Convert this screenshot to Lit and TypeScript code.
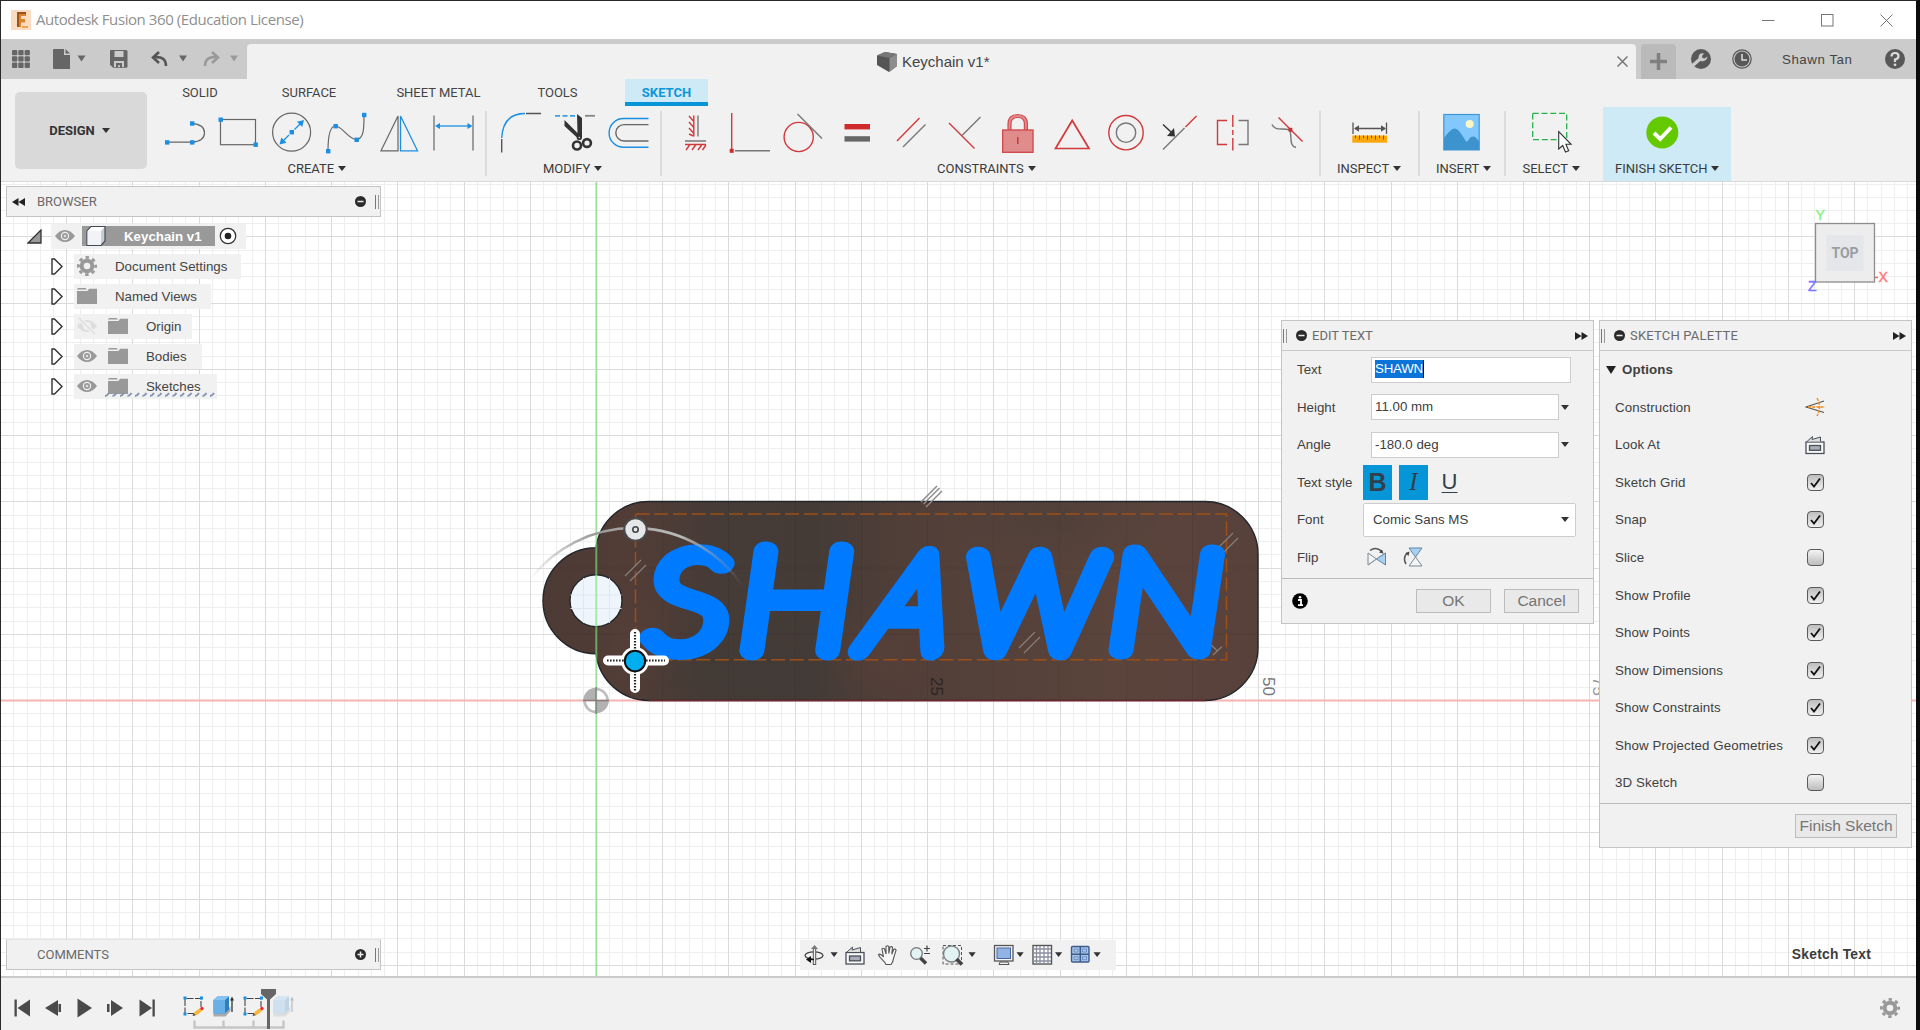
import { LitElement, html, svg, css } from "lit";
import { customElement } from "lit/decorators.js";

const GRID = 13.243;
const ORIGIN = { x: 596, y: 700.5 };

const caret = html`<i class="caret"></i>`;

const sq = (x: number, y: number) => svg`<rect x=${x - 2} y=${y - 2} width="4.4" height="4.4" fill="#1a8fe3"/>`;

const createIcons = svg`
  <g fill="none" stroke="#666" stroke-width="1.2">
    <path d="M167 142.2H192M192 123.3q12.5 1 12.5 9.5t-12.5 9.4"/>
    <rect x="220.5" y="119.5" width="35" height="25.2"/>
    <circle cx="291.6" cy="132.2" r="19"/>
    <path d="M328 151Q328 126 335.500 126C342 126 348 139 356.500 139.600C364 139 364 128 364 115"/>
    <path d="M381 150.800L398 116V150.800Z"/>
    <path d="M434 115.500V150.500M473 115.500V150.500"/>
  </g>
  <g fill="none" stroke="#1a8fe3" stroke-width="1.300">
    <path d="M400.500 116L417.500 150.800H400.500Z"/>
    <path d="M438 126H470"/>
    <path d="M283 141L289 135M294.500 129.500L300.500 123.500"/>
  </g>
  <g fill="#1a8fe3">
    <path d="M435 126l5-3v6zM472.500 126l-5-3v6z"/>
    <path d="M304 120l-7 1.800 5.200 5.200zM279.500 144.500l1.800-7 5.200 5.200z"/>
  </g>
  ${sq(167, 142.200)}${sq(192, 142.200)}${sq(192, 123.300)}${sq(220.500, 119.500)}${sq(255.500, 144.500)}
  ${sq(291.600, 132)}${sq(328, 151)}${sq(335.500, 126)}${sq(356.500, 139.600)}${sq(364, 114.800)}
`;

const modifyIcons = svg`
  <g fill="none" stroke-width="1.400">
    <path d="M501.700 138Q503 113.500 525 113.500" stroke="#1a8fe3"/>
    <path d="M501.700 139V152.500M526 113.500H541" stroke="#555"/>
    <path d="M555 115.800H575" stroke="#3a9ee8" stroke-dasharray="5 2.500" stroke-width="1.800"/>
    <path d="M585 115.800H595" stroke="#888" stroke-width="1.800"/>
    <path d="M648.500 118.500H623.500a14.300 14.300 0 0 0 0 28.800H648.500" stroke="#1a8fe3"/>
    <path d="M648.500 124.600H624a8.100 8.100 0 0 0 0 16.400H648.500" stroke="#666"/>
  </g>
  <path d="M577 114l5 4v20h-4.500l-13-12v-6l13 13z" fill="#333"/>
  <circle cx="577" cy="145.500" r="4" fill="none" stroke="#333" stroke-width="2.600"/>
  <circle cx="587" cy="143" r="3.900" fill="none" stroke="#333" stroke-width="2.600"/>
  <circle cx="579.300" cy="137.500" r="2.600" fill="#333"/><circle cx="579.300" cy="137.500" r=".8" fill="#ddd"/>
`;

const constraintIcons = svg`
  <g fill="none" stroke="#d03a3d" stroke-width="1.400">
    <path d="M693.800 115.500V136.500M689 116l4.800 5.500M689 122l4.800 5.500M689 128l4.800 5.500M689 134l4.500 2"/>
    <path d="M685 144.500H706M690 144.500l-4 5.500M696 144.500l-4 5.500M702 144.500l-4 5.500M706 145l-3.500 5"/>
    <path d="M731.700 113V150"/>
    <circle cx="798.700" cy="137" r="14.600"/>
    <path d="M897 141L919.500 118M949 123L974.500 148.500"/>
    <path d="M1055.500 148.500H1089L1072.200 120.500Z" stroke-width="1.700"/>
    <circle cx="1126" cy="132.700" r="17.200"/>
    <path d="M1185.500 127L1196.500 116"/>
    <path d="M1227 120.500H1217.500V144.500H1227M1232.800 115V150.500" />
    <path d="M1232.800 127v3M1232.800 135v3" stroke="#f1f1f1" stroke-width="3"/>
    <path d="M1278.500 117.500L1302.500 141.500"/>
  </g>
  <g fill="none" stroke="#777" stroke-width="1.400">
    <path d="M698 115.500V136.500M685 141H706"/>
    <path d="M735 150.800H770M797.500 114L822 138.500"/>
    <path d="M903 147L925.500 124.500M962 135.500L980.500 117"/>
    <circle cx="1126" cy="132.700" r="9.700"/>
    <path d="M1163 149.500L1184.500 128"/>
    <path d="M1238.500 120.500H1248V144.500H1238.500"/>
    <path d="M1272 124.500c3 7 10 3 18 5.500c2 8-1 16 6 17.500"/>
  </g>
  <rect x="729.700" y="148.800" width="4" height="4" fill="#d02a2d"/>
  <rect x="844.500" y="124" width="25.500" height="5.400" fill="#d02a2d"/>
  <rect x="844.500" y="136.200" width="25.500" height="5.400" fill="#666"/>
  <path d="M1009.500 130v-6q0-8 8.200-8t8.200 8v6" fill="none" stroke="#d24c4f" stroke-width="4.200"/>
  <path d="M1009.500 130v-6q0-8 8.200-8t8.200 8v6" fill="none" stroke="#e08b8c" stroke-width="1.800"/>
  <rect x="1002.700" y="130" width="30.300" height="22.300" fill="#e08b8c" stroke="#d24c4f" stroke-width="1.400"/>
  <path d="M1017.800 137v7" stroke="#c23336" stroke-width="1.400"/>
  <path d="M1163 124.500L1171 132" stroke="#333" stroke-width="1.500"/>
  <path d="M1175 136.500l-8-.5 7-8z" fill="#333"/>
  <rect x="1288.500" y="127.800" width="3.800" height="3.800" fill="#d02a2d"/>
`;

const inspectIcons = svg`
  <g stroke="#555" stroke-width="1.300" fill="none">
    <path d="M1353 122.500V134M1386.500 122.500V134M1355 128.500H1385"/>
  </g>
  <path d="M1354 128.500l5-3.200v6.400zM1386 128.500l-5-3.200v6.400z" fill="#555"/>
  <rect x="1352.300" y="135.500" width="34.800" height="7.200" fill="#f9a70b"/>
  <path d="M1355.500 135.500v2.500M1359.500 135.500v4M1363.500 135.500v2.500M1367.500 135.500v4M1371.500 135.500v2.500M1375.500 135.500v4M1379.500 135.500v2.500M1383.500 135.500v4" stroke="#7a5410" stroke-width="1"/>
`;

const insertIcons = svg`
  <rect x="1443.800" y="114.500" width="35.400" height="35.400" fill="#82c8fd" stroke="#3f97d3" stroke-width="1.200"/>
  <circle cx="1469.700" cy="124" r="4" fill="#fbf6c8"/>
  <path d="M1444 138c4-5 7-9.500 11-9.500s8 8.500 11.500 13.500c2.500-2 3.500-5.500 6.500-5.500s4 2.500 6.200 5V150H1444z" fill="#3d93ce"/>
`;

const selectIcons = svg`
  <rect x="1532.700" y="113.300" width="34" height="26.300" fill="none" stroke="#25b14c" stroke-width="1.300" stroke-dasharray="6 2.800"/>
  <path d="M1558.700 131.500v17.500l4-3.500 2.800 6.500 3.200-1.300-2.800-6.400h5.200z" fill="#fff" stroke="#333" stroke-width="1.100"/>
`;

const finishIcons = svg`
  <circle cx="1662.300" cy="132.500" r="16" fill="#65c900"/>
  <path d="M1654 133l6.200 6 10.800-11.500" fill="none" stroke="#fff" stroke-width="4"/>
`;

const groups = [
  { x: 160, w: 327, name: "CREATE", pad: "127.500px", art: createIcons },
  { x: 487, w: 175, name: "MODIFY", pad: "56px", art: modifyIcons },
  { x: 662, w: 659, name: "CONSTRAINTS", pad: "275px", art: constraintIcons },
  { x: 1321, w: 99, name: "INSPECT", pad: "16px", art: inspectIcons },
  { x: 1420, w: 86, name: "INSERT", pad: "16px", art: insertIcons },
  { x: 1506, w: 97, name: "SELECT", pad: "16.500px", art: selectIcons },
  { x: 1603, w: 128, name: "FINISH SKETCH", pad: "12px", art: finishIcons, on: true },
];

const tabs = [
  { n: "SOLID", w: 80 }, { n: "SURFACE", w: 138 }, { n: "SHEET METAL", w: 121 },
  { n: "TOOLS", w: 117 }, { n: "SKETCH", w: 83, on: true },
];

const eye = html`<svg class="i20" viewBox="0 0 20 20"><path d="M0 10Q4.500 4 10 4t10 6q-4.500 6-10 6T0 10z" fill="#999"/><circle cx="10" cy="10" r="4.200" fill="#f1f1f1"/><circle cx="10" cy="10" r="3" fill="#999"/><circle cx="10" cy="10" r="1.300" fill="#ddd"/></svg>`;
const eyeOff = html`<svg class="i20" viewBox="0 0 20 20"><path d="M0 10Q4.500 4 10 4t10 6q-4.500 6-10 6T0 10z" fill="#dedede"/><circle cx="10" cy="10" r="4" fill="#f1f1f1"/><circle cx="10" cy="10" r="2" fill="#dedede"/><path d="M2 2L18 18" stroke="#f1f1f1" stroke-width="4"/><path d="M2 2L18 18" stroke="#dedede" stroke-width="1.600"/></svg>`;
const folder = html`<svg class="i20" viewBox="0 0 20 20"><path d="M0 3.500Q0 2 1.500 2H8.500L10 3.500H0zM0 5h10.500L12 2.800H20V18H0z" fill="#999"/></svg>`;
const gear = html`<svg class="i20" viewBox="0 0 20 20"><circle cx="10" cy="10" r="5.300" fill="none" stroke="#999" stroke-width="4"/><circle cx="10" cy="10" r="8.600" fill="none" stroke="#999" stroke-width="2.800" stroke-dasharray="3.400 3.354" stroke-dashoffset="1.700"/></svg>`;
const expander = html`<svg class="exp" viewBox="0 0 12 17"><path d="M1 1h2.500l7.500 7.500L3.500 16H1z" fill="#fff" stroke="#333" stroke-width="1.400"/></svg>`;

const treeRows = [
  { label: "Document Settings", icons: [gear], w: 167 },
  { label: "Named Views", icons: [folder], w: 137 },
  { label: "Origin", icons: [eyeOff, folder], w: 118 },
  { label: "Bodies", icons: [eye, folder], w: 128 },
  { label: "Sketches", icons: [eye, folder], w: 143, wavy: true },
];

const minus = html`<svg class="i11" viewBox="0 0 11 11"><circle cx="5.500" cy="5.500" r="5.500" fill="#2b2b2b"/><path d="M2.500 5.500h6" stroke="#eee" stroke-width="1.500"/></svg>`;
const plus = html`<svg class="i11" viewBox="0 0 11 11"><circle cx="5.500" cy="5.500" r="5.500" fill="#2b2b2b"/><path d="M2.500 5.500h6M5.500 2.500v6" stroke="#eee" stroke-width="1.500"/></svg>`;
const ffwd = html`<svg class="ff" viewBox="0 0 13 8"><path d="M0 0l6.500 4L0 8zM6.500 0L13 4 6.500 8z" fill="#222"/></svg>`;
const grip = html`<i class="grip"></i>`;

const lookAt = (x: number, y: number) => svg`<g transform="translate(${x} ${y})" fill="none" stroke="#4a4f5a" stroke-width="1.300">
  <rect x="1" y="7" width="18" height="11.500" fill="#fafafa"/><rect x="4.500" y="10.500" width="11" height="4.800" fill="#a9adb8"/>
  <path d="M2 6.500L7.500 1.500 7 4.500 15.500 2V6.500" fill="#ddd" stroke-width="1"/></g>`;

const construction = html`<svg class="i20" viewBox="0 0 20 20"><path d="M19 4L1 10l18 5.500" fill="none" stroke="#555" stroke-width="1.300"/><path d="M3 10h17M12 1q5 9 0 18" fill="none" stroke="#f08a1c" stroke-width="1.500" stroke-dasharray="3 1.200"/></svg>`;

const checks: Array<[string, boolean]> = [
  ["Sketch Grid", true], ["Snap", true], ["Slice", false], ["Show Profile", true], ["Show Points", true],
  ["Show Dimensions", true], ["Show Constraints", true], ["Show Projected Geometries", true], ["3D Sketch", false],
];

const box = (on: boolean) => html`<span class="check ${on ? "on" : ""}">${on
  ? html`<svg viewBox="0 0 15 15"><path d="M3 8l3 3.500L12 3.500" fill="none" stroke="#111" stroke-width="1.800"/></svg>` : ""}</span>`;

const gridLines = () => {
  const out = [];
  for (let pass = 0; pass < 2; pass++) {
    for (let i = -45; i <= 100; i++) {
      const major = i % 5 === 0;
      if (major !== (pass === 1)) continue;
      const x = Math.round(ORIGIN.x + i * GRID) + 0.5;
      if (x > 0 && x < 1916) out.push(svg`<path d="M${x} 182V976" stroke=${major ? "#dbdbdb" : "#eeeeee"}/>`);
    }
    for (let j = -40; j <= 21; j++) {
      const major = j % 5 === 0;
      if (major !== (pass === 1)) continue;
      const y = Math.floor(ORIGIN.y + j * GRID) + 0.5;
      if (y > 182) out.push(svg`<path d="M0 ${y}H1916" stroke=${major ? "#dbdbdb" : "#eeeeee"}/>`);
    }
  }
  return out;
};

const tick = (x: number, y: number) => svg`<path d="M${x - 10} ${y + 5}L${x + 6} ${y - 11}M${x - 5} ${y + 10}L${x + 11} ${y - 6}"/>`;

/* Letters of the sketch text, each with its own stretch: x, scale x, scale y, skew, stroke width. */
const letters: Array<[string, number, number, number, number, number]> = [
  ["S", 647, 1.27, 1.02, 0, 19],
  ["H", 739, 1.24, 1.07, 0, 18.5],
  ["A", 861, 1.03, 1.01, -12, 21],
  ["W", 966, 1.1, 1.01, 0, 20.5],
  ["N", 1108, 1.26, 1.03, 0, 18.5],
];

const BODY = "M649 501.500H1205A53 53 0 0 1 1258 554.500V647.500A53 53 0 0 1 1205 700.500H649A53 53 0 0 1 596 653.700A53 53 0 0 1 543 600.700A53 53 0 0 1 596 547.700A53 53 0 0 1 649 501.500Z";

const scene = () => html`<svg class="scene" viewBox="0 182 1916 794">
  <defs>
    <linearGradient id="body" x1="543" x2="1258" y1="0" y2="0" gradientUnits="userSpaceOnUse">
      <stop offset="0" stop-color="#4c3a35"/><stop offset=".12" stop-color="#523d36"/><stop offset=".24" stop-color="#463b37"/>
      <stop offset=".38" stop-color="#443b37"/><stop offset=".5" stop-color="#503e38"/><stop offset=".62" stop-color="#54413a"/>
      <stop offset=".8" stop-color="#5a443c"/><stop offset="1" stop-color="#59413b"/>
    </linearGradient>
    <radialGradient id="patch"><stop offset="0" stop-color="#5b4039"/><stop offset="1" stop-color="#5b4039" stop-opacity="0"/></radialGradient>
    <radialGradient id="shade"><stop offset="0" stop-color="#413a35"/><stop offset="1" stop-color="#413a35" stop-opacity="0"/></radialGradient>
    <linearGradient id="arc" x1="530" x2="745" y1="0" y2="0" gradientUnits="userSpaceOnUse">
      <stop offset="0" stop-color="#888" stop-opacity="0"/><stop offset=".3" stop-color="#999"/><stop offset=".7" stop-color="#bbb"/><stop offset="1" stop-color="#888" stop-opacity="0"/>
    </linearGradient>
    <clipPath id="clip"><path d=${BODY}/></clipPath>
  </defs>
  ${gridLines()}
  <path d="M0 700.500H1916" stroke="#f5b3b3" stroke-width="2"/>
  <path d=${BODY} fill="url(#body)"/>
  <g clip-path="url(#clip)">
    <ellipse cx="880" cy="655" rx="70" ry="60" fill="url(#patch)" opacity=".6"/>
    <ellipse cx="740" cy="670" rx="130" ry="60" fill="url(#shade)" opacity=".8"/>
    <ellipse cx="1060" cy="520" rx="110" ry="50" fill="url(#shade)" opacity=".35"/>
    <ellipse cx="640" cy="640" rx="50" ry="60" fill="url(#patch)" opacity=".4"/>
  </g>
  <path d=${BODY} fill="none" stroke="#22262a" stroke-width="1.400"/>
  <path d="M649 700.500H1205" stroke="#6e2a30" stroke-width="1.600"/>
  <g stroke="#000" stroke-opacity=".06">
    ${[662, 728, 795, 861, 927, 993, 1059, 1126, 1192].map((x) => svg`<path d="M${x}.500 502V700"/>`)}
    ${[568, 634].map((y) => svg`<path d="M560 ${y}H1258"/>`)}
  </g>
  <circle cx="596" cy="600.700" r="26" fill="#eef5fc" stroke="#22262a" stroke-width="1.400"/>
  <path d="M570.500 595H621.500M570.500 608.500H621.500M583.500 578V623M609.500 578V623" stroke="#e0e8ee"/>
  <path d="M596.300 182V976" stroke="#7ee07e" stroke-opacity=".65" stroke-width="2"/>

  <rect x="635.500" y="514" width="591" height="145.700" fill="none" stroke="#9c5018" stroke-width="1.500" stroke-dasharray="14 4.700"/>
  <g stroke="#877f7a" stroke-width="1.200" fill="none">
    ${tick(635, 571)}${tick(1029, 643)}${tick(1227, 544)}
    <path d="M1213 655L1222 646.500M1209 643L1217.500 651"/>
  </g>
  <g stroke="#8c8c8c" stroke-width="1.500">${tick(931, 497)}<path d="M923.500 504L939.500 488"/></g>

  <g class="shawn">${letters.map(([ch, x, sx, sy, skew, w]) => svg`<text transform="translate(${x} 650) skewX(${skew}) scale(${sx} ${sy})" stroke-width=${w}>${ch}</text>`)}</g>

  <path d="M531 578A131 131 0 0 1 742 585" fill="none" stroke="url(#arc)" stroke-width="2.600"/>
  <circle cx="635.500" cy="529.500" r="11.200" fill="#e6e7e9" stroke="#4a4a4a" stroke-width="2"/>
  <circle cx="635.500" cy="529.500" r="2.700" fill="none" stroke="#444" stroke-width="1.600"/>

  <path d="M608 660.500H664M635 634V688" stroke="#fff" stroke-width="10" stroke-linecap="round"/>
  <circle cx="635" cy="661" r="14" fill="#fff"/>
  <path d="M607 660.500H665M635 632V691" stroke="#222" stroke-width="2.200" stroke-dasharray="1.600 1.400"/>
  <circle cx="635" cy="661" r="10.200" fill="#00aeef" stroke="#111" stroke-width="2"/>

  <g opacity=".75">
    <circle cx="596" cy="700.500" r="11.500" fill="#fff" fill-opacity=".5" stroke="#a9a9a9" stroke-width="2.600"/>
    <path d="M596 700.500V688A12.500 12.500 0 0 0 583.500 700.500ZM596 700.500V713A12.500 12.500 0 0 0 608.500 700.500Z" fill="#999"/>
    <path d="M596 687V714M583 700.500H609" stroke="#6d6d6d" stroke-width="1.500"/>
  </g>
  <g class="mark">
    <text transform="translate(931 677) rotate(90)" fill="#2e2522">25</text>
    <text transform="translate(1262.500 677) rotate(90)" fill="#777">50</text>
    <text transform="translate(1592.500 677) rotate(90)" fill="#999">75</text>
  </g>

  <g class="cube">
    <text x="1815.500" y="220" fill="#8cf08c" stroke="#8cf08c">Y</text>
    <rect x="1815.500" y="223.500" width="59" height="58.500" fill="#ededed" stroke="#8d8d8d" stroke-width="1.300"/>
    <rect x="1826.500" y="235" width="37" height="36" fill="#e4e6e9"/>
    <text class="top" x="1845" y="258" text-anchor="middle">TOP</text>
    <text x="1808" y="290.500" fill="#7a7aff" stroke="#7a7aff">Z</text>
    <path d="M1875 277.500h3" stroke="#ff5b5b" stroke-width="1.500"/>
    <text x="1878.500" y="282" fill="#ff8080" stroke="#ff8080">X</text>
  </g>
</svg>`;

const navIcons = html`<svg width="316" height="30" viewBox="800 940 316 30">
  <ellipse cx="814" cy="955.500" rx="9" ry="3.600" fill="none" stroke="#444" stroke-width="1.300"/>
  <path d="M814.500 948V965" stroke="#555" stroke-width="3.400"/><path d="M814.500 948V964" stroke="#eee" stroke-width="1.400"/>
  <path d="M811 949l3.500-4 3.500 4z" fill="#777"/>
  <path d="M806 959.500l5-3.500v7z" fill="#111"/><path d="M809 959.500h5" stroke="#111" stroke-width="1.300"/>
  ${lookAt(845, 945.500)}
  <path d="M886 964.500c-1-3.500-6.500-6-7.500-10q2-1.500 5 2.500l-1.500-8q1.500-1.500 2.500 0l1.500 5V946.500q1.500-1.500 2.800 0v7l1.200-6.500q1.700-1 2.500.3l-.7 7 2-5q1.800-.6 2.300.8l-2.500 8q-.5 4-2.500 6.400z" fill="#f8f8f8" stroke="#555" stroke-width="1.100"/>
  <circle cx="916.500" cy="953.500" r="5.800" fill="#e3f3f4" stroke="#777" stroke-width="1.300"/>
  <path d="M920.500 958l5.500 5.500" stroke="#444" stroke-width="3.500"/>
  <path d="M924 948.500h6M927 945.500v6M924 953.500h6" stroke="#444" stroke-width="1.200"/>
  <rect x="943" y="945.500" width="18.500" height="18.500" fill="none" stroke="#555" stroke-dasharray="3 2"/>
  <circle cx="951.500" cy="954" r="8" fill="#e3f3f4" stroke="#7d8486" stroke-width="1.400"/>
  <path d="M956.500 959l5.500 5.500" stroke="#444" stroke-width="3.800"/>
  <path d="M1000 962h8l1 2.500h-10z" fill="#eee" stroke="#555"/>
  <rect x="994.500" y="945.500" width="18.500" height="15.500" fill="#f4f4f4" stroke="#555" stroke-width="1.300"/>
  <rect x="997" y="948" width="13.500" height="10.500" fill="#92b4e4" stroke="#4766a3"/>
  <rect x="1033" y="945.500" width="18.500" height="18.500" fill="#fff" stroke="#555" stroke-width="1.400"/>
  <path d="M1036.500 946v18M1040 946v18M1044 946v18M1048 946v18M1033 949h18M1033 953h18M1033 957h18M1033 961h18" stroke="#8a8fa0" stroke-width="1.300"/>
  <rect x="1071.500" y="946.500" width="17.500" height="15.500" rx="1" fill="#a9c5ea" stroke="#3e5b8c" stroke-width="1.400"/>
  <path d="M1080.300 946.500v15.500M1071.500 954.200h17.500" stroke="#3e5b8c" stroke-width="1.600"/>
  <path d="M1074 949h4v3h-4zM1082.500 949h4v3h-4zM1074 956.700h4v3h-4zM1082.500 956.700h4v3h-4z" fill="none" stroke="#5f86bd" stroke-width=".8"/>
  ${[834, 972, 1020, 1058.500, 1097].map((x) => svg`<path d="M${x - 3.500} 952.300h7.200l-3.600 4.700z" fill="#333"/>`)}
</svg>`;

const skIcon = (x: number) => svg`<g transform="translate(${x} 0)">
  <path d="M1.500 999v14.500H11M3 998.500H17.500V1007" fill="none" stroke="#444" stroke-width="1.100" stroke-dasharray="7 1.500"/>
  <path d="M10 1015.500l1-3.500 5.500-4 2.500 2.800-5.500 4.200z" fill="#f5b83d"/><path d="M9 1016l1-3 2.300 2.200z" fill="#555"/>
  <circle cx="18.500" cy="1008.500" r="1.700" fill="#ee2b33"/>
  <path d="M0 996.500h3v3H0zM16.500 996.500h3v3h-3zM0 1012.500h3v3H0z" fill="#1a8fe3"/></g>`;
const exIcon = (x: number, o: number) => svg`<g transform="translate(${x} 0)" opacity=${o}>
  <path d="M0 1013.500V1016.500H12L17 1011V1006L12 1013z" fill="#aaa"/>
  <path d="M0 1000l4-3.500h11.500v13l-4 4H0z" fill="#2f7fbf"/><path d="M0 1000h11.500v13.500H0z" fill="#69b0e6"/><path d="M0 1000l4-3.500h11.500l-4 3.500z" fill="#86c5f3"/>
  <path d="M18.500 1012V999" stroke="#333" stroke-width="1.300"/><path d="M16.500 1000.500l2-4 2 4z" fill="#333"/></g>`;

const timeline = html`<svg width="330" height="52" viewBox="0 978 330 52">
  <g fill="#4a4a4a">
    <path d="M14.500 999.500h2.300v17h-2.300zM17.500 1008l12.500-8.500v17z"/>
    <path d="M45 1008l13-8v16zM58.500 1004h2.500v8h-2.500z"/>
    <path d="M77.500 998.500l14.500 9.500-14.500 9.500z"/>
    <path d="M107 1004h2.500v8h-2.500zM111 1000l12 8-12 8z"/>
    <path d="M139.500 999.500l12.500 8.500-12.500 8.500zM152.500 999.500h2.300v17h-2.300z"/>
  </g>
  <path d="M194.500 1020.500v7H283.500v-7M223.500 1020.500v7M253.500 1020.500v7" fill="none" stroke="#c6c6c6" stroke-width="2.400"/>
  ${skIcon(183.500)}${exIcon(213.500, 1)}${skIcon(243.500)}${exIcon(273.500, 0.25)}
  <path d="M261 989h15v5l-6 5.500V1029h-3V999.500L261 994z" fill="#666"/>
</svg>`;

@customElement("app-root")
export class AppRoot extends LitElement {
  static styles = css`
    :host { display: block; }
    * { box-sizing: border-box; }
    svg { display: block; flex: none; }
    .win { width: 1920px; height: 1030px; display: flex; flex-direction: column; background: #f1f1f1; overflow: hidden;
      border-top: 1px solid #2b2829; border-left: 1px solid #2b2829; border-right: 4px solid #0c0c0c;
      font: 13.3px "Liberation Sans", Arial, sans-serif; color: #3c3c3c; white-space: nowrap; }
    .caret { display: inline-block; border: 4px solid transparent; border-top: 5px solid #333; border-bottom: 0; flex: none; }

    .title { height: 38px; flex: none; background: #fff; display: flex; align-items: center; padding: 0 23px 0 10px; color: #8f8f8f; }
    .title span { font: 15px "Open Sans", sans-serif; letter-spacing: -0.42px; margin: -2px 0 0 5px; flex: 1; }
    .title .ctl { display: flex; gap: 46px; }

    .bar { height: 40px; flex: none; background: #cbcbcb; display: flex; align-items: flex-end; }
    .tab { width: 1389px; height: 35px; background: #f1f1f1; border-radius: 4px 4px 0 0; display: flex; align-items: center; padding: 0 8px 0 630px; }
    .tab span { font-size: 15px; margin-left: 5px; flex: 1; color: #444; }
    .add { width: 35px; height: 35px; margin-left: 5px; background: #bababa; border-radius: 4px 4px 0 0; display: grid; place-items: center; }
    .user { height: 40px; flex: 1; display: flex; align-items: center; padding-left: 15px; }
    .user span { margin: 0 32px 0 30px; color: #444; letter-spacing: .55px; }

    .ribbon { height: 103px; flex: none; display: flex; border-bottom: 1px solid #d9d9d9; }
    .design { width: 132px; height: 77px; margin: 13px 13px 0 14px; background: #d9d9d9; border-radius: 5px; display: flex; align-items: center;
      justify-content: center; gap: 7px; font: 700 13px Roboto, sans-serif; color: #333; padding-right: 3px; }
    .tabs { display: flex; height: 28px; font: 13px Roboto, sans-serif; color: #444; }
    .tabs div { height: 27px; display: grid; place-items: center; }
    .tabs .on { margin-left: 9px; background: #cdeaf6; border-bottom: 4px solid #0696d7; color: #0d97d8; font-weight: 700; padding-top: 3px; }
    .groups { display: flex; height: 74px; }
    .group { border-right: 2px solid #dedede; border-image: linear-gradient(#f1f1f1 5px, #dcdcdc 5px, #dcdcdc 68px, #f1f1f1 68px) 1; }
    .group.on { background: #cdeaf6; border: 0; }
    .group.last { border: 0; }
    .group .lbl { font: 13px Roboto, sans-serif; color: #3a3a3a; display: flex; align-items: center; gap: 4px; height: 22px; margin-top: -1px; }

    .canvas { position: relative; height: 794px; flex: none; background: #fff; overflow: hidden; }
    .scene { width: 1916px; height: 794px; margin-left: -1px; }
    .shawn { font: italic 100 132px Lato, sans-serif; fill: #007aff; stroke: #007aff; stroke-linejoin: round; }
    .mark { font: 17px "Liberation Sans", sans-serif; }
    .cube { font: 14px "Liberation Sans", sans-serif; stroke-width: .5; }
    .top { font: 700 14px Roboto, sans-serif; fill: #9a9da2; }

    .panel { position: absolute; background: #f1f1f1; border: 1px solid #c4c4c4; color: #404040; }
    .head { height: 30px; display: flex; align-items: center; border-bottom: 1px solid #c9c9c9; color: #666; }
    .head b { font: 13px Roboto, sans-serif; flex: 1; color: #6a6a6a; }
    .grip { width: 4px; height: 14px; border-left: 1px solid #777; border-right: 1px solid #999; }
    .i11 { width: 11px; height: 11px; } .i20 { width: 20px; height: 20px; } .ff { width: 13px; height: 8px; } .exp { width: 12px; height: 17px; }
    .strip { left: 5px; width: 375px; height: 31px; }
    .strip .head { border: 0; padding-right: 1px; height: 29px; gap: 9px; }
    .strip.b { top: 4px; } .strip.c { top: 757px; border-top-color: #e4e4e4; }

    .tree { position: absolute; left: 0; top: 39px; }
    .row { height: 30px; display: flex; align-items: center; }
    .row .exp { margin: 0 11px 0 50px; }
    .cell { height: 25px; background: #f1f1f1; display: flex; align-items: center; padding-left: 3px; gap: 11px; position: relative; }
    .cell span { margin-left: 7px; color: #444; }
    .root .cell { margin-left: 9px; width: 195px; gap: 0; padding-left: 4px; }
    .root .sel { height: 20px; width: 133px; margin: 0 4px 0 7px; background: #999; color: #fff; font-weight: 700; display: flex; align-items: center; }
    .root .sel span { color: #fff; margin-left: 18px; }
    .wavy { position: absolute; left: 30px; bottom: 2px; }

    .edit { left: 1280px; top: 138px; width: 313px; height: 304px; }
    .edit .head, .pal .head { padding: 0 5px 0 1px; gap: 9px; }
    .edit .head b, .pal .head b { margin-left: -4px; }
    .form { padding: 0 0 0 15px; }
    .form > div { height: 37.500px; display: flex; align-items: center; }
    .form label { width: 74px; }
    .in { background: #fff; border: 1px solid #cdcdcd; height: 26px; display: flex; align-items: center; padding: 0 3px 1px; }
    .in mark { background: #0b74d8; color: #fff; border-right: 1px solid #111; height: 18px; line-height: 18px; letter-spacing: -.2px; }
    .form .caret { margin-left: 2px; }
    .sty { width: 29px; height: 35px; background: #0696d7; display: grid; place-items: center; margin-right: 7px; font: 700 25px "Liberation Sans", sans-serif; color: #32404c; }
    .sty.i { font: italic 25px "Liberation Serif", serif; }
    .sty.u { background: none; font-weight: 400; font-size: 22px; text-decoration: underline; text-decoration-thickness: 1px; text-underline-offset: 3px; }
    .font { height: 34px; width: 213px; justify-content: space-between; padding: 0 6px 0 9px; border-radius: 2px; }
    .foot { border-top: 1px solid #bbb; display: flex; align-items: center; }
    .btn { border: 1px solid #bcbcbc; background: #e9e9e9; color: #757575; font-size: 15.500px; height: 24px; display: grid; place-items: center; width: 75px; }

    .pal { left: 1598px; top: 138px; width: 313px; height: 528px; }
    .opt { padding-left: 15px; }
    .opt div { height: 37.550px; display: flex; align-items: center; }
    .opt label { width: 190px; letter-spacing: .1px; }
    .opt .h { margin-left: -9px; font-weight: 700; gap: 6px; letter-spacing: .1px; }
    .check { width: 17px; height: 17px; margin-left: 2px; border: 1.500px solid #5a5a5a; border-radius: 4px; background: linear-gradient(#f4f4f4, #bcbcbc); display: grid; place-items: center; }
    .check.on { background: linear-gradient(#bdbdbd, #f0f0f0); }
    .check svg { width: 15px; height: 15px; }
    .nav { position: absolute; left: 799px; top: 758px; background: #f1f1f1; }
    .status { position: absolute; right: 45px; top: 765px; font: 700 13.800px "Liberation Sans", sans-serif; letter-spacing: .25px; color: #3c3c3c; }
    .time { flex: 1; border-top: 2px solid #cacaca; display: flex; justify-content: space-between; align-items: center; padding-right: 16.500px; }
    .time svg:first-child { margin-left: -1px; }
    .time .i20 { margin-top: 8px; }
  `;

  render() {
    return html`<div class="win">
      <div class="title">
        <svg width="20" height="20" viewBox="0 0 20 20"><rect width="20" height="20" fill="#fbdcc0"/><path d="M6 2h9v4h-5v3h4v3.500h-4V17H6z" fill="#d9822f"/><path d="M6 2h9v2H8v13H6z" fill="#9a551c"/><path d="M11 17h6" stroke="#f1a35a" stroke-width="2"/></svg>
        <span>Autodesk Fusion 360 (Education License)</span>
        <div class="ctl">
          <svg width="13" height="13" viewBox="0 0 13 13"><path d="M0 6.500h12.500" stroke="#777"/></svg>
          <svg width="13" height="13" viewBox="0 0 13 13"><rect x=".5" y=".5" width="11.500" height="11.500" fill="none" stroke="#777"/></svg>
          <svg width="13" height="13" viewBox="0 0 13 13"><path d="M.5.5l12 12M12.500.5l-12 12" stroke="#777"/></svg>
        </div>
      </div>
      <div class="bar">
        <svg width="246" height="40" viewBox="1 39 246 40">
          <g fill="#666">
            ${[0, 1, 2].map((r) => [0, 1, 2].map((c) => svg`<rect x=${12 + c * 6.300} y=${50 + r * 6.300} width="5.300" height="5.300" rx="1"/>`))}
            <path d="M54 49h10v6h6v14H54q-1 0-1-1V50q0-1 1-1zM65.500 49l4.500 4.500h-4.500z"/>
            <path d="M111 50h15q1.500 0 1.500 1.500V66.500q0 1.200-1.500 1.200H113l-3-3V51q0-1 1-1z"/>
            <path d="M77.500 55.500h8l-4 6zM179 55.500h8l-4 6z"/><path d="M230 55.500h8l-4 6z" fill="#999"/>
          </g>
          <path d="M114.500 51h9v6h-9zM114 61h10v6h-10z" fill="#cbcbcb"/><path d="M116 63h6v4.700h-2v-2.500h-2v2.500h-2z" fill="#666"/>
          <path d="M159 52l-6 5.500 6 5.500M153.500 57.500c8-1.500 12.500 1.500 12.500 8.500" fill="none" stroke="#555" stroke-width="2.600"/>
          <path d="M212 52l6 5.500-6 5.500M217.500 57.500c-8-1.500-12.500 1.500-12.500 8.500" fill="none" stroke="#999" stroke-width="2.600"/>
        </svg>
        <div class="tab">
          <svg width="20" height="20" viewBox="0 0 20 20"><path d="M0 3.500L8 0l12 2v12l-8 6L0 13z" fill="#555"/><path d="M0 3.500L8 0l12 2-7.500 4z" fill="#777"/><path d="M12.500 6L20 2v12l-7.500 6z" fill="#8d8d8d"/></svg>
          <span>Keychain v1*</span>
          <svg width="11" height="11" viewBox="0 0 11 11"><path d="M.5.5l10 10M10.500.5l-10 10" stroke="#777" stroke-width="1.500"/></svg>
        </div>
        <div class="add"><svg width="17" height="17" viewBox="0 0 17 17"><path d="M8.500 0v17M0 8.500h17" stroke="#808080" stroke-width="3.500"/></svg></div>
        <div class="user">
          <svg width="20" height="20" viewBox="0 0 20 20"><circle cx="10" cy="10" r="10" fill="#585858"/><path d="M0 18L8.500 10.500" stroke="#cbcbcb" stroke-width="3.200"/><path d="M13 4.500q-5-1-5.500 4t5.500 3.500q3-1 3.500-4.500l-3 2-2-.5-.5-2z" fill="#cbcbcb"/></svg>
          <svg width="20" height="20" viewBox="0 0 20 20" style="margin-left:21px"><circle cx="10" cy="10" r="9.200" fill="#cbcbcb" stroke="#585858" stroke-width="1.200"/><circle cx="10" cy="10" r="7.500" fill="#585858"/><path d="M10 5v6h5" fill="none" stroke="#ddd" stroke-width="1.500"/></svg>
          <span>Shawn Tan</span>
          <svg width="20" height="20" viewBox="0 0 20 20"><circle cx="10" cy="10" r="10" fill="#585858"/><path d="M6.500 7.500q0-3.500 3.500-3.500t3.500 3-3.500 3.500v2.500" fill="none" stroke="#dcdcdc" stroke-width="2.200"/><circle cx="10" cy="15.800" r="1.400" fill="#dcdcdc"/></svg>
        </div>
      </div>
      <div class="ribbon">
        <div class="design">DESIGN ${caret}</div>
        <div>
          <div class="tabs">${tabs.map((t) => html`<div class=${t.on ? "on" : ""} style="width:${t.w}px">${t.n}</div>`)}</div>
          <div class="groups">${groups.map((g) => html`<div class="group ${g.on ? "on" : ""} ${g.name === "SELECT" ? "last" : ""}" style="width:${g.w}px">
            <svg width=${g.w - 2} height="51" viewBox="${g.x} 107 ${g.w - 2} 51">${g.art}</svg>
            <div class="lbl" style="padding-left:${g.pad}">${g.name} ${caret}</div></div>`)}</div>
        </div>
      </div>
      <div class="canvas">
        ${scene()}
        <div class="panel strip b"><div class="head" style="padding-left:5px"><svg width="13" height="8" viewBox="0 0 13 8"><path d="M6.500 0L0 4l6.500 4zM13 0L6.500 4 13 8z" fill="#222"/></svg><b style="margin-left:3px">BROWSER</b>${minus}${grip}</div></div>
        <div class="panel strip c"><div class="head" style="padding-left:30px"><b>COMMENTS</b>${plus}${grip}</div></div>
        <div class="tree">
          <div class="row root">
            <svg width="15" height="15" viewBox="0 0 15 15" style="margin-left:26px"><path d="M14 1v13H1z" fill="#9a9a9a" stroke="#333" stroke-width="1.300"/></svg>
            <div class="cell">${eye}<div class="sel"><svg width="20" height="20" viewBox="0 0 20 20" style="margin-left:4px"><path d="M1 5l4-4.500h14V15l-4 4.500H1z" fill="#c9ccd4" stroke="#444a55" stroke-width="1.200"/><path d="M1.500 5h13.500v14H1.500z" fill="#f2f3f6"/><path d="M1.500 5l4-4h13l-3.500 4z" fill="#fff"/></svg><span>Keychain v1</span></div>
              <svg width="18" height="18" viewBox="0 0 18 18"><circle cx="9" cy="9" r="7.700" fill="#fff" stroke="#333" stroke-width="1.300"/><circle cx="9" cy="9" r="3.300" fill="#222"/></svg></div>
          </div>
          ${treeRows.map((r) => html`<div class="row">${expander}<div class="cell" style="width:${r.w}px">${r.icons}<span>${r.label}</span>
            ${r.wavy ? html`<svg class="wavy" width="112" height="5" viewBox="0 0 112 5"><path d=${Array.from({ length: 15 }, (_, i) => `M${1 + i * 7.5} 4q2 0 4-3`).join("")} fill="none" stroke="#8592b3" stroke-width="2"/></svg>` : ""}</div></div>`)}
        </div>

        <div class="panel edit">
          <div class="head">${grip}${minus}<b>EDIT TEXT</b>${ffwd}</div>
          <div class="form">
            <div><label>Text</label><span class="in" style="width:200px"><mark>SHAWN</mark></span></div>
            <div><label>Height</label><span class="in" style="width:188px">11.00 mm</span>${caret}</div>
            <div><label>Angle</label><span class="in" style="width:188px">-180.0 deg</span>${caret}</div>
            <div><label style="width:66px">Text style</label><span class="sty">B</span><span class="sty i">I</span><span class="sty u">U</span></div>
            <div><label style="width:66px">Font</label><span class="in font">Comic Sans MS ${caret}</span></div>
            <div><label style="width:70px">Flip</label>
              <svg width="20" height="20" viewBox="0 0 20 20"><path d="M1 6v12l8.500-6z" fill="#f4f4f4" stroke="#7b8794"/><path d="M18.500 6v12L9.500 12z" fill="#a9d0f0" stroke="#5f86a8"/><path d="M1 18l17-12" stroke="#8a98a8"/><path d="M3 3.500q6-4.500 12 1" fill="none" stroke="#555" stroke-width="1.500"/><path d="M16.500 6.500l-4.500-1 3-3z" fill="#444"/></svg>
              <svg width="20" height="20" viewBox="0 0 20 20" style="margin-left:16px"><path d="M6 1h13l-6.500 9z" fill="#a9d0f0" stroke="#5f86a8"/><path d="M6 19h13l-6.500-9z" fill="#f4f4f4" stroke="#7b8794"/><path d="M3 17q-3.500-6 1-11" fill="none" stroke="#555" stroke-width="1.500"/><path d="M6.500 4.500l-1 4.500-3-3z" fill="#444"/></svg></div>
          </div>
          <div class="foot" style="height:45px;padding:0 14px 0 10px;margin-top:2px">
            <svg width="16" height="16" viewBox="0 0 16 16"><circle cx="8" cy="8" r="7.800" fill="#000"/><path d="M6 7h3v5M6 12.200h5" fill="none" stroke="#fff" stroke-width="1.800"/><circle cx="8" cy="4.200" r="1.300" fill="#fff"/></svg>
            <span class="btn" style="margin-left:auto">OK</span><span class="btn" style="margin-left:13px">Cancel</span></div>
        </div>

        <div class="panel pal">
          <div class="head">${grip}${minus}<b style="letter-spacing:.2px">SKETCH PALETTE</b>${ffwd}</div>
          <div class="opt">
            <div class="h"><svg width="10" height="8" viewBox="0 0 10 8"><path d="M0 0h10L5 8z" fill="#222"/></svg>Options</div>
            <div><label>Construction</label>${construction}</div>
            <div><label>Look At</label><svg class="i20" viewBox="0 0 20 20">${lookAt(0, 0)}</svg></div>
            ${checks.map(([n, on]) => html`<div><label>${n}</label>${box(on)}</div>`)}
          </div>
          <div class="foot" style="height:46px;padding-right:14px;margin-top:1px"><span class="btn" style="margin-left:auto;width:102px">Finish Sketch</span></div>
        </div>
        <div class="nav">${navIcons}</div>
        <div class="status">Sketch Text</div>
      </div>
      <div class="time">${timeline}${gear}</div>
    </div>`;
  }
}
